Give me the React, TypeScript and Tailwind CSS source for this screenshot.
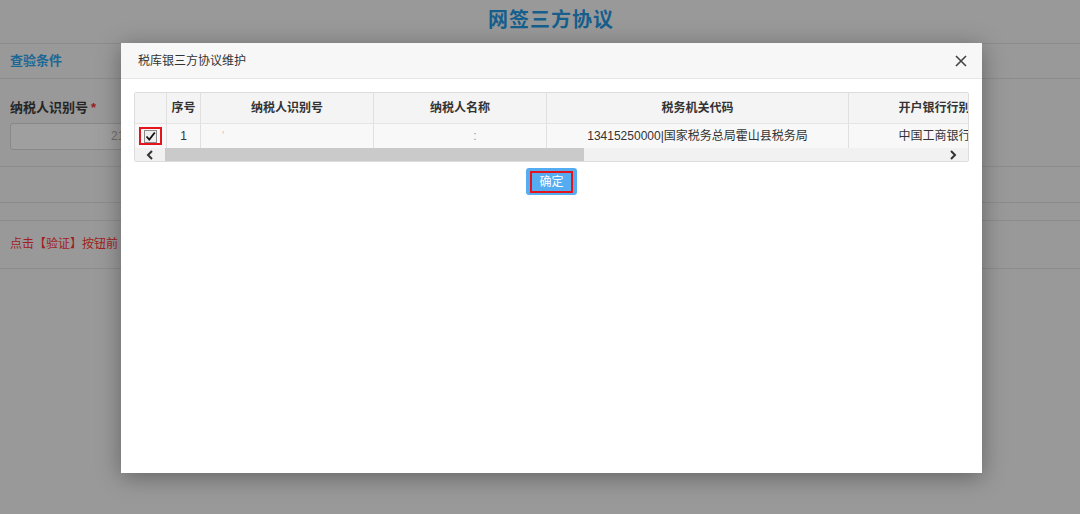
import React from "react";

const font = { fontFamily: '"Liberation Sans", "Noto Sans CJK SC", sans-serif' };

function Chevron({ dir }: { dir: "l" | "r" }) {
  return (
    <svg width="8" height="10" viewBox="0 0 8 10">
      <path
        d={dir === "l" ? "M6 1 L2 5 L6 9" : "M2 1 L6 5 L2 9"}
        fill="none"
        stroke="#333"
        strokeWidth="2"
      />
    </svg>
  );
}

export default function App() {
  return (
    <div className="relative h-[514px] w-full overflow-hidden bg-[#999999]" style={font}>
      {/* underlying page (dimmed) */}
      <div className="flex flex-col">
        <div className="flex h-[44px] items-center justify-center border-b border-[#8c8c8c] pb-[4px] pl-[22px]">
          <span className="text-[20px] font-bold tracking-[1px] text-[#165f8d]">网签三方协议</span>
        </div>
        <div className="flex h-[35px] items-center border-b border-[#8c8c8c] px-[10px]">
          <span className="text-[13px] font-bold text-[#1b6795]">查验条件</span>
        </div>
        <div className="flex flex-col px-[10px] pt-[19px]">
          <div className="flex items-center text-[13px] font-bold text-[#262626]">
            纳税人识别号<span className="ml-[3px] text-[#9c1a1a]">*</span>
          </div>
          <div className="mt-[5px] flex h-[27px] w-[200px] items-center rounded-[3px] border border-[#888] bg-[#9f9f9f] pl-[100px] text-[12px] text-[#6f6f6f]">
            21
          </div>
        </div>
        <div className="mt-[16px] h-[36px] border-t border-[#8c8c8c]" />
        <div className="h-[18px] border-t border-[#8c8c8c]" />
        <div className="flex h-[48px] items-center border-t border-[#8c8c8c] px-[10px]">
          <span className="text-[12px] text-[#a11f1f]">点击【验证】按钮前</span>
        </div>
        <div className="border-t border-[#8c8c8c]" />
      </div>

      {/* modal */}
      <div className="absolute left-[121px] top-[43px] flex h-[430px] w-[861px] flex-col bg-white shadow-[0_4px_22px_rgba(0,0,0,0.35)]">
        <div className="flex h-[36px] shrink-0 items-center justify-between border-b border-[#e6e6e6] bg-[#f7f7f7] pl-[17px] pr-[15px]">
          <span className="text-[12px] text-[#333]">税库银三方协议维护</span>
          <svg width="12" height="12" viewBox="0 0 12 12">
            <path d="M1 1 L11 11 M11 1 L1 11" stroke="#444" strokeWidth="1.6" />
          </svg>
        </div>
        <div className="flex flex-col items-center p-[13px]">
          <div className="w-full overflow-hidden rounded-[2px] border border-[#dcdcdc]">
            <div className="flex h-[30px] w-[1100px] bg-[#f4f4f4] text-[12px] font-bold text-[#333]">
              <div className="w-[32px] border-r border-[#e0e0e0]" />
              <div className="flex w-[34px] items-center justify-center border-r border-[#e0e0e0]">序号</div>
              <div className="flex w-[173px] items-center justify-center border-r border-[#e0e0e0]">纳税人识别号</div>
              <div className="flex w-[173px] items-center justify-center border-r border-[#e0e0e0]">纳税人名称</div>
              <div className="flex w-[302px] items-center justify-center border-r border-[#e0e0e0]">税务机关代码</div>
              <div className="flex w-[172px] items-center justify-center border-r border-[#e0e0e0]">开户银行行别</div>
            </div>
            <div className="flex h-[25px] w-[1100px] border-t border-[#e4e4e4] bg-[#f8f8f8] text-[12px] text-[#333]">
              <div className="flex w-[32px] items-center justify-center border-r border-[#e0e0e0]">
                <div className="flex h-[18px] w-[23px] items-center justify-center border-2 border-[#e3141c]">
                  <div className="flex h-[13px] w-[13px] items-center justify-center border border-[#8a8a8a] bg-[#eee]">
                    <svg width="11" height="11" viewBox="0 0 11 11">
                      <path d="M1.5 5.5 L4.3 8.5 L9.8 1.5" fill="none" stroke="#111" strokeWidth="1.8" />
                    </svg>
                  </div>
                </div>
              </div>
              <div className="flex w-[34px] items-center justify-center border-r border-[#e0e0e0]">1</div>
              <div className="flex w-[173px] items-center border-r border-[#e0e0e0] pl-[21px] text-[#d9c9b8]">'</div>
              <div className="flex w-[173px] items-center justify-center border-r border-[#e0e0e0] pl-[30px] text-[#999]">:</div>
              <div className="flex w-[302px] items-center justify-center border-r border-[#e0e0e0]">13415250000|国家税务总局霍山县税务局</div>
              <div className="flex w-[172px] items-center justify-center border-r border-[#e0e0e0]">中国工商银行</div>
            </div>
            <div className="flex h-[13px] w-full items-center bg-[#f1f1f1]">
              <div className="flex w-[30px] justify-center"><Chevron dir="l" /></div>
              <div className="h-full w-[419px] bg-[#cacaca]" />
              <div className="flex-1" />
              <div className="flex w-[30px] justify-center"><Chevron dir="r" /></div>
            </div>
          </div>
          <div className="mt-[6px] flex h-[27px] w-[51px] items-center justify-center rounded-[3px] bg-[#55acf0]">
            <div className="flex h-[22px] w-[43px] items-center justify-center border-2 border-[#e3141c] text-[12px] text-white">
              确定
            </div>
          </div>
        </div>
      </div>
    </div>
  );
}
